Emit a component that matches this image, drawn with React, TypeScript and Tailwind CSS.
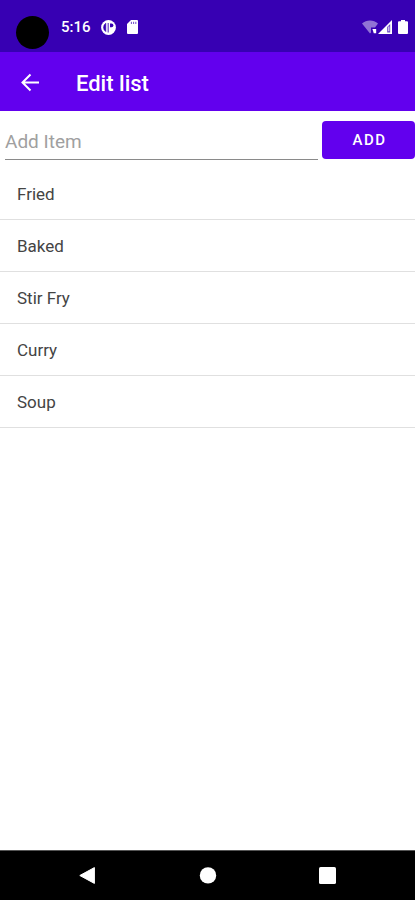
import { useState } from "react";
import type { FormEvent } from "react";

const initialItems = ["Fried", "Baked", "Stir Fry", "Curry", "Soup"];

function StatusBar() {
  return (
    <div className="flex h-[52px] items-center bg-[#3700b3] pl-4 pr-[7px] text-white">
      <div className="mt-3 h-[33px] w-[33px] rounded-full bg-black" />
      <span className="ml-3 mt-0.5 text-[15px] leading-5 font-medium">5:16</span>
      <svg className="ml-2.5 mt-0.5" width="15" height="15" viewBox="0 0 15 15">
        <circle cx="7.5" cy="7.5" r="7.4" fill="#fff" />
        <path d="M4.8 3.2v8.4A5 5 0 0 1 4.8 3.2z" fill="#3700b3" stroke="#3700b3" strokeWidth="0.6" />
        <path d="M6.6 3h1.2v9.4H6.6z" fill="#3700b3" opacity="0.75" />
        <path d="M9 3.6h1.6a1.8 1.8 0 0 1 0 3.6H9z" fill="#3700b3" />
      </svg>
      <svg className="ml-[11px] mt-0.5" width="11" height="14" viewBox="0 0 11 14">
        <path d="M4 0h6a1 1 0 0 1 1 1v12a1 1 0 0 1-1 1H1a1 1 0 0 1-1-1V4z" fill="#fff" />
        <path d="M4.4 1.8v2.2M6.6 1.8v2.2M8.8 1.8v2.2" stroke="#3700b3" strokeWidth="1" opacity="0.7" />
      </svg>
      <div className="ml-auto mt-0.5 flex items-center">
        <svg width="16" height="14" viewBox="0 0 16 14">
          <path d="M0 3.6C4.4-.4 11.6-.4 16 3.6L13 7.6H9v4.8l-1 1z" fill="#fff" opacity="0.45" />
          <path d="M10.4 9h3.8v4.2h-2.4z" fill="#fff" />
        </svg>
        <svg width="14" height="14" viewBox="0 0 14 14">
          <path d="M0 14 14 0v14z" fill="#fff" />
          <path d="M9.2 12.4V7l3-3v8.4z" fill="#3700b3" opacity="0.75" />
          <path d="M10.2 6.6h1.2v4.6h-1.2z" fill="#fff" opacity="0.8" />
        </svg>
        <svg className="ml-1.5" width="10" height="14" viewBox="0 0 10 14">
          <path d="M3 0h4v1.2h2a1 1 0 0 1 1 1V13a1 1 0 0 1-1 1H1a1 1 0 0 1-1-1V2.2a1 1 0 0 1 1-1h2z" fill="#fff" />
        </svg>
      </div>
    </div>
  );
}

function NavBar() {
  return (
    <nav className="flex h-[50px] items-center justify-between border-t border-[#555555] bg-black px-[78px]">
      <button type="button" aria-label="Back">
        <svg width="18" height="18" viewBox="0 0 18 18">
          <path d="M1.8 8.5 16.4.6v15.8z" fill="#fff" stroke="#fff" strokeLinejoin="round" />
        </svg>
      </button>
      <button type="button" aria-label="Home">
        <svg width="18" height="18" viewBox="0 0 18 18">
          <circle cx="9" cy="8.4" r="8.2" fill="#fff" />
        </svg>
      </button>
      <button type="button" aria-label="Recent apps">
        <svg width="18" height="18" viewBox="0 0 18 18">
          <rect x="0" y="0" width="17" height="17" rx="1.6" fill="#fff" />
        </svg>
      </button>
    </nav>
  );
}

export default function App() {
  const [items, setItems] = useState(initialItems);
  const [text, setText] = useState("");

  const addItem = (e: FormEvent) => {
    e.preventDefault();
    if (!text.trim()) return;
    setItems([...items, text.trim()]);
    setText("");
  };

  return (
    <div className="flex min-h-screen flex-col bg-white font-[Roboto,sans-serif]">
      <StatusBar />

      <header className="flex h-[59px] items-center bg-[#6200ee] px-5 text-white">
        <button type="button" aria-label="Navigate up">
          <svg width="20" height="20" viewBox="0 0 20 20" fill="none" stroke="#fff" strokeWidth="2">
            <path d="M19 10.5H3M10.5 2.5l-8 8 8 8" />
          </svg>
        </button>
        <h1 className="ml-9 mt-1 text-[22px] leading-6 font-medium">Edit list</h1>
      </header>

      <main className="flex-1">
        <form onSubmit={addItem} className="flex h-[57px] items-start gap-1 pt-2.5 pl-[5px]">
          <input
            type="text"
            aria-label="Add Item"
            placeholder="Add Item"
            value={text}
            onChange={(e) => setText(e.target.value)}
            className="h-[39px] min-w-0 flex-1 border-b border-[#8a8a8a] pt-0.5 text-[19px] leading-6 text-[#333333] outline-none placeholder:text-[#a0a0a0]"
          />
          <button type="submit" className="h-[38px] w-[93px] rounded bg-[#6200ee] pl-0.5 text-[15px] font-medium tracking-widest text-white">
            ADD
          </button>
        </form>

        <ul>
          {items.map((item, i) => (
            <li key={i} className="flex h-[52px] items-center border-b border-[#e0e0e0] px-[17px] text-[17px] leading-6 text-[#444444]">
              {item}
            </li>
          ))}
        </ul>
      </main>

      <NavBar />
    </div>
  );
}
